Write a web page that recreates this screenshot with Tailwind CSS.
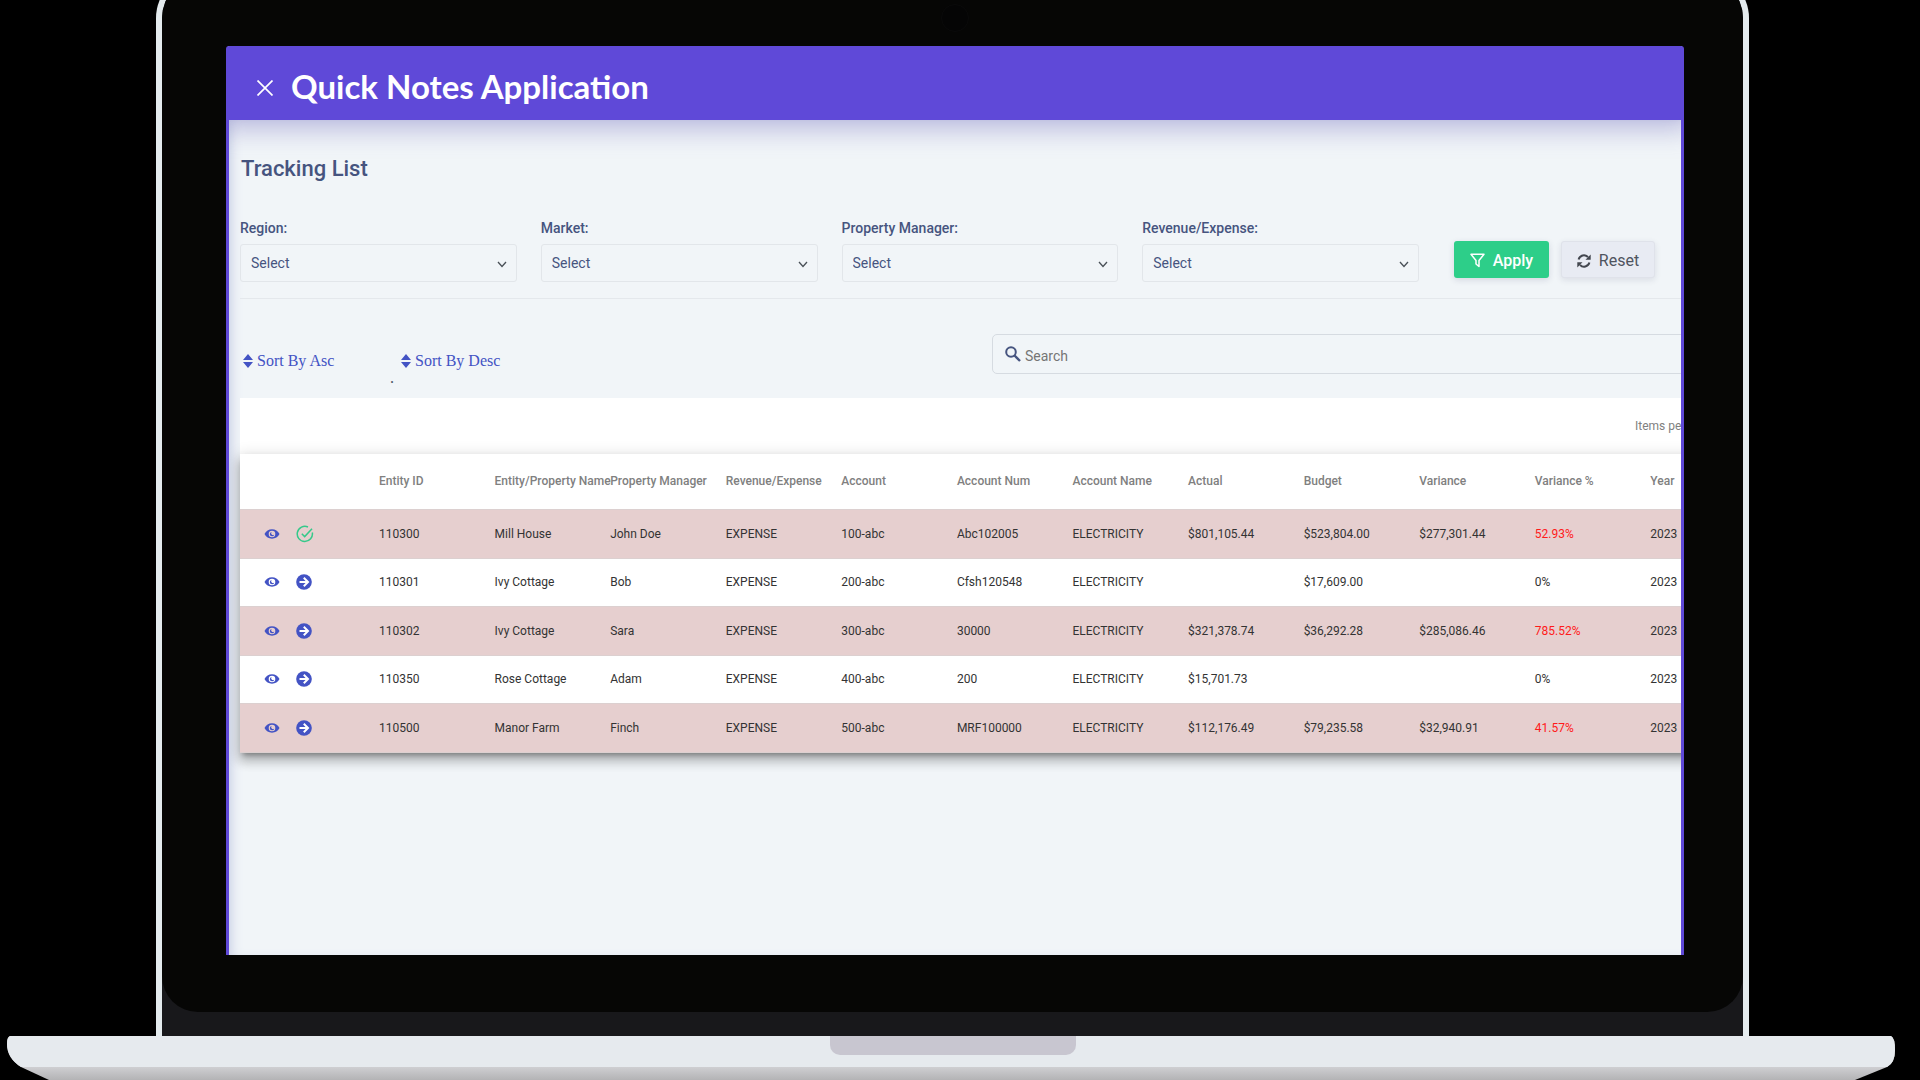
<!DOCTYPE html>
<html lang="en">
<head>
<meta charset="utf-8">
<meta name="viewport" content="width=device-width, initial-scale=1">
<title>Quick Notes Application</title>
<script src="https://cdn.jsdelivr.net/npm/@tailwindcss/browser@4"></script>
</head>
<body class="bg-black font-['Roboto',sans-serif]">
<svg class="hidden" aria-hidden="true">
  <symbol id="chevron" viewBox="0 0 10 7"><path d="M1 1l4 4.500L9 1" fill="none" stroke="#495057" stroke-width="1.300"/></symbol>
  <symbol id="sort" viewBox="0 0 10 14"><path d="M5 0l5 6H0zM5 14l5-6H0z" fill="#4353c4"/></symbol>
  <symbol id="eye" viewBox="0 0 16 12"><path fill-rule="evenodd" d="M8 1.300C4.700 1.300 2 3.200.5 6 2 8.800 4.700 10.700 8 10.700S14 8.800 15.500 6C14 3.200 11.300 1.300 8 1.300zM8 2.700a3.300 3.300 0 1 1 0 6.600 3.300 3.300 0 0 1 0-6.600z" fill="#4353c4"/><path d="M7.700 3.900a2.200 2.200 0 1 0 2.500 2.500 1.600 1.600 0 0 1-2.500-2.500z" fill="#4353c4"/></symbol>
  <symbol id="go" viewBox="0 0 16 16"><circle cx="8" cy="8" r="7.800" fill="#4353c4"/><path d="M3.500 8h8M7.800 3.800L12 8l-4.200 4.200" fill="none" stroke="#fff" stroke-width="2"/></symbol>
  <symbol id="done" viewBox="0 0 18 18"><path d="M16.300 7.500A7.600 7.600 0 1 1 12 2M5.800 8.700l2.900 2.900L16 3.800" fill="none" stroke="#35c98a" stroke-width="1.500"/></symbol>
</svg>
<div class="flex min-h-screen flex-col overflow-hidden">
  <!-- Laptop lid -->
  <div class="-mt-7 mr-[171px] ml-[156px] flex grow flex-col rounded-t-[46px] border-x-6 border-t-6 border-[#e4ebee] bg-[#18181b] pb-6">
    <div class="flex grow flex-col rounded-t-[40px] rounded-b-[36px] bg-[#060605] pr-[59px] pb-[57px] pl-16">
      <div class="flex h-[68px] items-center justify-center pt-3">
        <span class="size-7 rounded-full border border-[#0a0a0a] bg-[#050505]"></span>
      </div>
      <!-- Screen -->
      <div class="flex grow flex-col overflow-hidden rounded-t-[3px] border-x-3 border-[#5f49d8] bg-[#f1f5f8]">
        <header class="z-10 flex h-[74px] items-center gap-[18px] bg-[#5f49d8] pt-[6px] pl-7 shadow-[0_0_24px_10px_rgba(95,90,180,0.36)]">
          <button type="button" aria-label="Close" class="mt-1"><svg class="size-4" viewBox="0 0 16 16"><path d="M0.500.5l15 15M15.500.5l-15 15" stroke="#fff" stroke-width="1.700"/></svg></button>
          <h1 class="font-['Lato',sans-serif] text-[33px] leading-10 font-bold whitespace-nowrap text-white">Quick Notes Application</h1>
        </header>
        <main class="grow overflow-hidden pl-[11px] shadow-[inset_8px_0_12px_-6px_#c6cce4]">
          <h2 class="mt-[33px] pl-px text-[22px] leading-8 font-medium text-[#46547f]">Tracking List</h2>
          <form class="mt-[31px] flex items-end gap-6 border-b border-[#e4e8ec] pr-[26px] pb-4">
            <div class="flex-1">
              <label for="region" class="block text-sm leading-6 font-medium text-[#46547f]">Region:</label>
              <div class="mt-1 grid items-center">
                <select id="region" class="col-start-1 row-start-1 h-[38px] w-full appearance-none rounded-[3px] border border-[#e2e6ea] bg-transparent px-[10px] text-sm text-[#46547f]"><option>Select</option></select>
                <svg class="pointer-events-none col-start-1 row-start-1 mt-[3px] mr-[10px] h-[7px] w-[10px] justify-self-end"><use href="#chevron"/></svg>
              </div>
            </div>
            <div class="flex-1">
              <label for="market" class="block text-sm leading-6 font-medium text-[#46547f]">Market:</label>
              <div class="mt-1 grid items-center">
                <select id="market" class="col-start-1 row-start-1 h-[38px] w-full appearance-none rounded-[3px] border border-[#e2e6ea] bg-transparent px-[10px] text-sm text-[#46547f]"><option>Select</option></select>
                <svg class="pointer-events-none col-start-1 row-start-1 mt-[3px] mr-[10px] h-[7px] w-[10px] justify-self-end"><use href="#chevron"/></svg>
              </div>
            </div>
            <div class="flex-1">
              <label for="manager" class="block text-sm leading-6 font-medium text-[#46547f]">Property Manager:</label>
              <div class="mt-1 grid items-center">
                <select id="manager" class="col-start-1 row-start-1 h-[38px] w-full appearance-none rounded-[3px] border border-[#e2e6ea] bg-transparent px-[10px] text-sm text-[#46547f]"><option>Select</option></select>
                <svg class="pointer-events-none col-start-1 row-start-1 mt-[3px] mr-[10px] h-[7px] w-[10px] justify-self-end"><use href="#chevron"/></svg>
              </div>
            </div>
            <div class="flex-1">
              <label for="kind" class="block text-sm leading-6 font-medium text-[#46547f]">Revenue/Expense:</label>
              <div class="mt-1 grid items-center">
                <select id="kind" class="col-start-1 row-start-1 h-[38px] w-full appearance-none rounded-[3px] border border-[#e2e6ea] bg-transparent px-[10px] text-sm text-[#46547f]"><option>Select</option></select>
                <svg class="pointer-events-none col-start-1 row-start-1 mt-[3px] mr-[10px] h-[7px] w-[10px] justify-self-end"><use href="#chevron"/></svg>
              </div>
            </div>
            <div class="mb-1 ml-[11px] flex gap-3">
              <button type="button" class="flex h-[37px] w-[95px] items-center justify-center gap-2 rounded-[3px] bg-[#2dce89] pt-[2px] text-base font-medium text-white shadow-[0_2px_6px_rgba(50,50,93,0.15)]">
                <svg class="size-[15px]" viewBox="0 0 15 15"><path d="M1 1.300h13L9 7.500v6L6 11V7.500z" fill="none" stroke="#fff" stroke-width="1.500" stroke-linejoin="round"/></svg>Apply</button>
              <button type="button" class="flex h-[37px] w-[94px] items-center justify-center gap-2 rounded-[3px] border border-[#dfe2ea] bg-[#e8ebf3] pt-[2px] text-base text-[#4f545e] shadow-[0_2px_6px_rgba(50,50,93,0.12)]">
                <svg class="size-[14px]" viewBox="0 0 14 14"><path d="M1.600 5.500A5.500 5.500 0 0 1 11 3.200M12.400 8.500A5.500 5.500 0 0 1 3 10.800" fill="none" stroke="#43474f" stroke-width="2"/><path d="M13.700.6v5.200H8.500zM.3 13.400V8.200h5.200z" fill="#43474f"/></svg>Reset</button>
            </div>
          </form>

          <div class="mt-[35px] flex items-start">
            <div class="flex flex-1 pt-[17px] pl-[3px] font-['Liberation_Serif',serif] text-base leading-5 text-[#4353c4]">
              <button type="button" class="flex w-[158px] items-center gap-1"><svg class="h-[14px] w-[10px]"><use href="#sort"/></svg>Sort By Asc</button>
              <button type="button" class="flex items-center gap-1"><svg class="h-[14px] w-[10px]"><use href="#sort"/></svg>Sort By Desc</button>
            </div>
            <div class="-mr-2 flex h-10 w-[697px] items-center gap-1 rounded-[5px] border border-[#d6dbe1] pl-3">
              <svg class="size-4" viewBox="0 0 16 16"><circle cx="6" cy="6" r="4.800" fill="none" stroke="#46547f" stroke-width="2"/><path d="M9.500 9.500l5.500 5.500" stroke="#46547f" stroke-width="2.400"/></svg>
              <input type="search" aria-label="Search" placeholder="Search" class="h-9 grow bg-transparent pt-[3px] text-sm outline-none placeholder:text-[#757575]">
            </div>
          </div>
          <div class="flex h-6 pl-[150px] font-['Liberation_Serif',serif] text-base leading-6 text-[#4b5563]"><span class="-mt-2 h-6">.</span></div>

          <div class="flex h-14 items-center justify-end bg-white text-xs text-[#808080]"><span class="-mr-[34px] w-20 whitespace-nowrap">Items per page:</span></div>
          <table class="w-[calc(100%+85px)] table-fixed border-collapse bg-white text-left text-xs whitespace-nowrap text-[#333] shadow-[0_5px_5px_-3px_rgba(0,0,0,0.3),0_8px_10px_1px_rgba(0,0,0,0.18),0_3px_14px_2px_rgba(0,0,0,0.14)]">
            <thead>
              <tr class="h-[55px] text-[#808080] *:font-medium">
                <th class="w-[139px]"></th><th>Entity ID</th><th>Entity/Property Name</th><th>Property Manager</th><th>Revenue/Expense</th><th>Account</th><th>Account Num</th><th>Account Name</th><th>Actual</th><th>Budget</th><th>Variance</th><th>Variance %</th><th>Year</th>
              </tr>
            </thead>
            <tbody>
              <tr class="h-[49px] border-y border-[#dcd0d0] bg-[#e6cfcf]">
                <td><div class="flex items-center gap-4 pl-6"><svg class="h-3 w-4"><use href="#eye"/></svg><svg class="size-[18px]"><use href="#done"/></svg></div></td>
                <td>110300</td><td>Mill House</td><td>John Doe</td><td>EXPENSE</td><td>100-abc</td><td>Abc102005</td><td>ELECTRICITY</td><td>$801,105.44</td><td>$523,804.00</td><td>$277,301.44</td><td class="text-[#ff1a1a]">52.93%</td><td>2023</td>
              </tr>
              <tr class="h-12">
                <td><div class="flex items-center gap-4 pl-6"><svg class="h-3 w-4"><use href="#eye"/></svg><svg class="size-4"><use href="#go"/></svg></div></td>
                <td>110301</td><td>Ivy Cottage</td><td>Bob</td><td>EXPENSE</td><td>200-abc</td><td>Cfsh120548</td><td>ELECTRICITY</td><td></td><td>$17,609.00</td><td></td><td>0%</td><td>2023</td>
              </tr>
              <tr class="h-[49px] border-y border-[#dcd0d0] bg-[#e6cfcf]">
                <td><div class="flex items-center gap-4 pl-6"><svg class="h-3 w-4"><use href="#eye"/></svg><svg class="size-4"><use href="#go"/></svg></div></td>
                <td>110302</td><td>Ivy Cottage</td><td>Sara</td><td>EXPENSE</td><td>300-abc</td><td>30000</td><td>ELECTRICITY</td><td>$321,378.74</td><td>$36,292.28</td><td>$285,086.46</td><td class="text-[#ff1a1a]">785.52%</td><td>2023</td>
              </tr>
              <tr class="h-12">
                <td><div class="flex items-center gap-4 pl-6"><svg class="h-3 w-4"><use href="#eye"/></svg><svg class="size-4"><use href="#go"/></svg></div></td>
                <td>110350</td><td>Rose Cottage</td><td>Adam</td><td>EXPENSE</td><td>400-abc</td><td>200</td><td>ELECTRICITY</td><td>$15,701.73</td><td></td><td></td><td>0%</td><td>2023</td>
              </tr>
              <tr class="h-[49px] border-y border-[#dcd0d0] bg-[#e6cfcf]">
                <td><div class="flex items-center gap-4 pl-6"><svg class="h-3 w-4"><use href="#eye"/></svg><svg class="size-4"><use href="#go"/></svg></div></td>
                <td>110500</td><td>Manor Farm</td><td>Finch</td><td>EXPENSE</td><td>500-abc</td><td>MRF100000</td><td>ELECTRICITY</td><td>$112,176.49</td><td>$79,235.58</td><td>$32,940.91</td><td class="text-[#ff1a1a]">41.57%</td><td>2023</td>
              </tr>
            </tbody>
          </table>
        </main>
      </div>
    </div>
  </div>
  <!-- Laptop base -->
  <div class="relative mr-[25px] ml-[7px] flex h-11 justify-center">
    <svg class="absolute inset-0 size-full" viewBox="0 0 1888 44" preserveAspectRatio="none" aria-hidden="true">
      <defs><linearGradient id="edge" x1="0" y1="0" x2="0" y2="1"><stop offset="0.700" stop-color="#cfcfd2"/><stop offset="1" stop-color="#b3b3b5"/></linearGradient></defs>
      <path d="M3 0H1884Q1888 2 1888 14Q1888 27 1880 31L1848 44H42L14 31Q0 22 0 8Q0 1 3 0z" fill="url(#edge)"/>
      <path d="M3 0H1884Q1888 2 1888 14Q1888 27 1880 31H14Q0 22 0 8Q0 1 3 0z" fill="#e6eaee"/>
    </svg>
    <div class="relative ml-1 h-[19px] w-[246px] rounded-b-[10px] bg-[#c8c6d0]"></div>
  </div>
</div>
</body>
</html>
